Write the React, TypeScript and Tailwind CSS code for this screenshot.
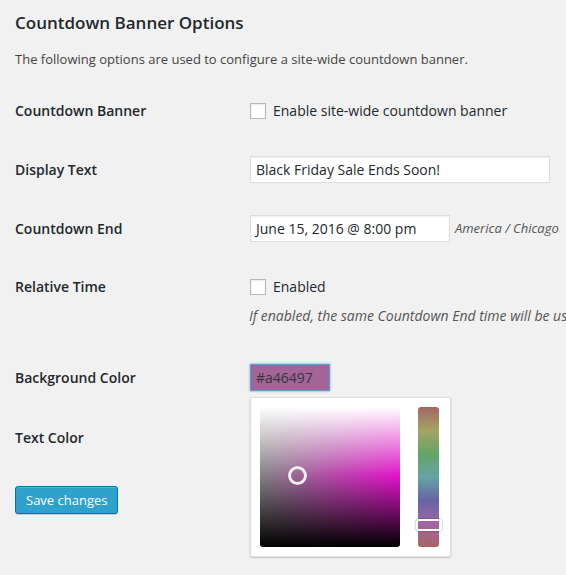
import type { ReactNode } from 'react'

function Row({ label, children, className = '' }: { label: string; children: ReactNode; className?: string }) {
  return (
    <div className={`flex ${className}`}>
      <div className="w-[235px] shrink-0 text-[14px] font-semibold leading-[20px]">{label}</div>
      <div className="flex-1 min-w-0">{children}</div>
    </div>
  )
}

function Checkbox() {
  return (
    <span className="block w-4 h-4 shrink-0 bg-white border border-[#b4b9be] shadow-[inset_0_1px_2px_rgba(0,0,0,0.1)]" />
  )
}

function ColorPicker() {
  return (
    <div className="absolute left-0 top-[33px] z-10 w-[201px] h-[160px] bg-white border border-[#dfdfdf] shadow-[0_1px_2px_rgba(0,0,0,0.2)] rounded-[2px] flex p-[9px] gap-[18px]">
      {/* saturation / lightness square */}
      <div className="relative w-[140px] h-[140px] rounded-[3px] bg-[image:linear-gradient(to_bottom,#fff,#fff0_50%,#0000_50%,#000),linear-gradient(to_right,#808080,#e010c8)]">
        <span className="absolute left-[28px] top-[59px] w-[19px] h-[19px] rounded-full border-[3px] border-[#eee] shadow-[0_0_1px_rgba(0,0,0,0.4)]" />
      </div>
      {/* hue strip */}
      <div className="relative w-[21px] h-[140px] rounded-[3px] bg-[linear-gradient(to_bottom,#a46565,#a4a465,#65a465,#65a4a4,#6565a4,#a465a4,#a46565)]">
        <span className="absolute -left-[2px] -right-[3px] top-[112px] h-[12px] rounded-[3px] border-2 border-white shadow-[0_0_2px_rgba(0,0,0,0.5)]" />
      </div>
    </div>
  )
}

export default function App() {
  return (
    <div className="w-[566px] h-[575px] overflow-hidden bg-[#f1f1f1] text-[#23282d] font-['Open_Sans',sans-serif]">
      <div className="pl-[15px]">
        <h2 className="pt-[11px] text-[17px] leading-[24px] font-semibold">Countdown Banner Options</h2>
        <p className="mt-[14px] text-[13px] leading-[20px] text-[#444]">
          The following options are used to configure a site-wide countdown banner.
        </p>

        <div className="mt-[12px]">
          <Row label="Countdown Banner" className="h-[59px] items-center">
            <label className="flex items-center gap-[7px] text-[14px] leading-[20px]">
              <Checkbox />
              Enable site-wide countdown banner
            </label>
          </Row>

          <Row label="Display Text" className="h-[59px] items-center">
            <div className="w-[300px] h-[27px] bg-white border border-[#ddd] shadow-[inset_0_1px_2px_rgba(0,0,0,0.07)] px-[5px] text-[14px] leading-[25px]">
              Black Friday Sale Ends Soon!
            </div>
          </Row>

          <Row label="Countdown End" className="h-[59px] items-center">
            <div className="flex items-center gap-[5px]">
              <div className="w-[200px] h-[27px] bg-white border border-[#ddd] shadow-[inset_0_1px_2px_rgba(0,0,0,0.07)] px-[5px] text-[14px] leading-[25px]">
                June 15, 2016 @ 8:00 pm
              </div>
              <span className="text-[13px] italic text-[#555] whitespace-nowrap">America / Chicago</span>
            </div>
          </Row>

          <Row label="Relative Time" className="h-[90px] items-start pt-[19px]">
            <label className="flex items-center gap-[7px] text-[14px] leading-[20px]">
              <Checkbox />
              Enabled
            </label>
            <p className="mt-[9px] text-[14px] leading-[20px] italic text-[#555] whitespace-nowrap overflow-hidden -ml-px">
              If enabled, the same Countdown End time will be used for every visitor.
            </p>
          </Row>

          <Row label="Background Color" className="h-[59px] items-center">
            <div className="relative">
              <div className="w-[80px] h-[27px] bg-[#a46497] border border-[#5b9dd9] shadow-[0_0_2px_rgba(30,140,190,0.8)] px-[5px] text-[14px] leading-[25px] text-[#32373c]">
                #a46497
              </div>
              <ColorPicker />
            </div>
          </Row>

          <Row label="Text Color" className="h-[62px] items-center">
            <div className="h-[27px]" />
          </Row>
        </div>

        <button className="mt-[17px] h-[28px] px-[10px] rounded-[3px] bg-[#2ea2cc] border border-[#0074a2] text-white text-[13px] leading-[26px] shadow-[inset_0_1px_0_rgba(120,200,230,0.5),0_1px_0_rgba(0,0,0,0.15)]">
          Save changes
        </button>
      </div>
    </div>
  )
}
